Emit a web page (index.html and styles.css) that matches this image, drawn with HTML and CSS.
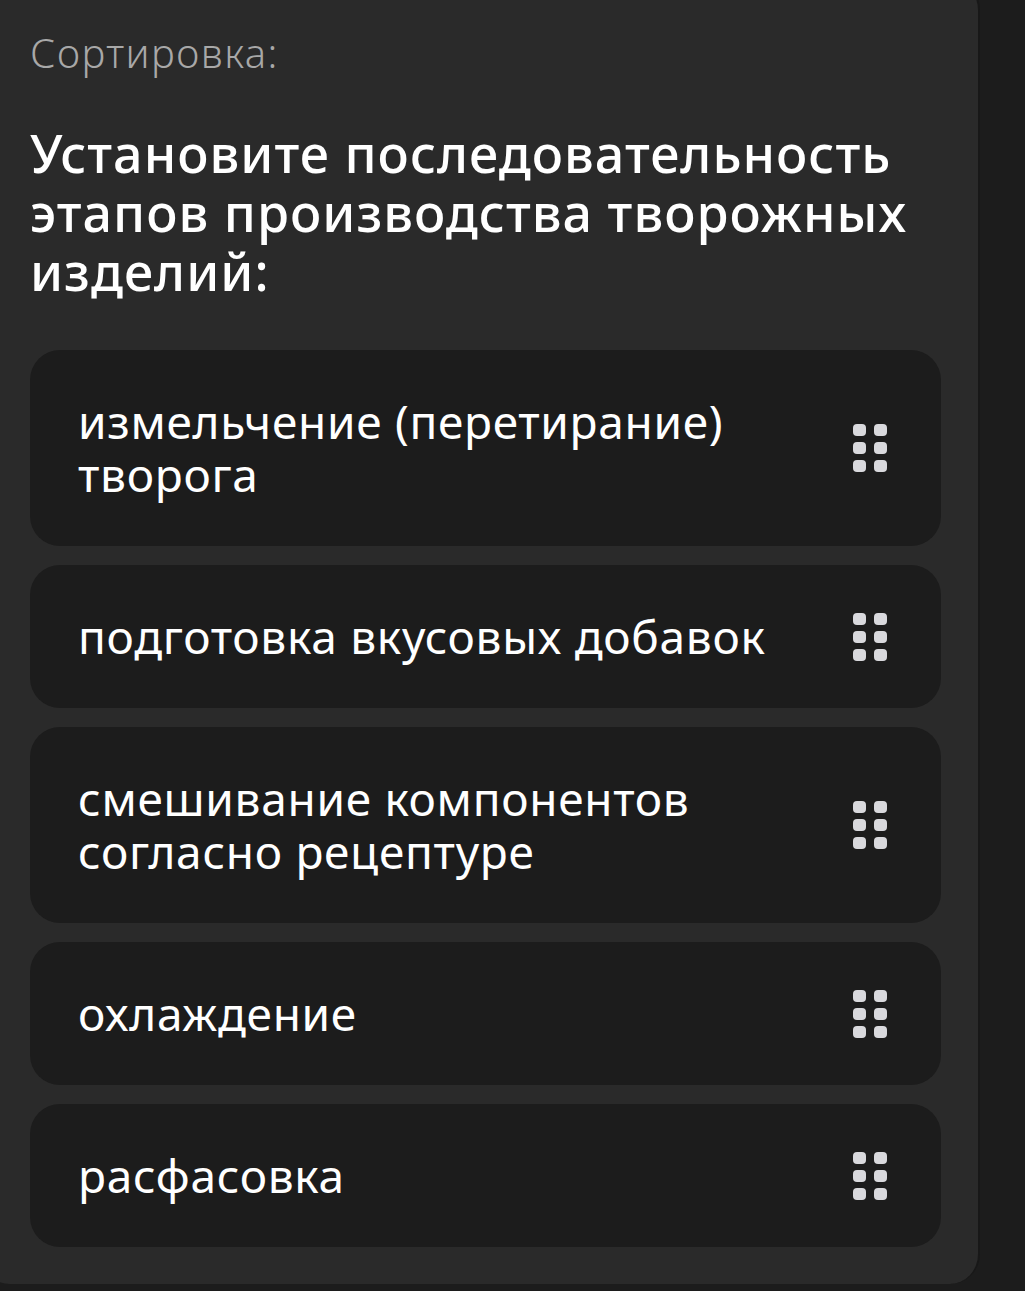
FILE: index.html
```html
<!DOCTYPE html>
<html lang="ru">
    <head>
        <meta charset="UTF-8">
        <meta name="viewport" content="width=device-width, initial-scale=1.0">
        <title>Сортировка</title>
        <link rel="stylesheet" href="styles.css">
    </head>
    <body>
        <div class="task-card">
            <div class="task-type">Сортировка:</div>
            <h1 class="task-question">Установите последовательность этапов производства творожных изделий:</h1>

            <div class="sort-list">
                <div class="sort-item">
                    <span class="sort-text">измельчение (перетирание) творога</span>
                    <span class="grip"><i></i><i></i><i></i><i></i><i></i><i></i></span>
                </div>
                <div class="sort-item">
                    <span class="sort-text">подготовка вкусовых добавок</span>
                    <span class="grip"><i></i><i></i><i></i><i></i><i></i><i></i></span>
                </div>
                <div class="sort-item">
                    <span class="sort-text">смешивание компонентов согласно рецептуре</span>
                    <span class="grip"><i></i><i></i><i></i><i></i><i></i><i></i></span>
                </div>
                <div class="sort-item">
                    <span class="sort-text">охлаждение</span>
                    <span class="grip"><i></i><i></i><i></i><i></i><i></i><i></i></span>
                </div>
                <div class="sort-item">
                    <span class="sort-text">расфасовка</span>
                    <span class="grip"><i></i><i></i><i></i><i></i><i></i><i></i></span>
                </div>
            </div>
        </div>
    </body>
</html>
```

FILE: styles.css
```css
* {
    margin: 0;
    padding: 0;
    box-sizing: border-box;
}

body {
    background-color: #1c1c1c;
    color: #fff;
    font-family: 'Noto Sans', 'DejaVu Sans', sans-serif;
    overflow: hidden;
}

.task-card {
    background-color: #2a2a2a;
    border-right: 2px solid #181818;
    border-radius: 30px;
    width: 1000px;
    margin: -20px 0 0 -20px;
    padding: 51px 37px 37px 50px;
}

.task-type {
    color: #a8a8a8;
    font-size: 40px;
    font-weight: 300;
    letter-spacing: 1.5px;
    line-height: 44px;
    margin-bottom: 48px;
}

.task-question {
    font-size: 52px;
    font-weight: 500;
    letter-spacing: 1px;
    line-height: 59px;
    margin-bottom: 50px;
}

.sort-list {
    display: flex;
    flex-direction: column;
    gap: 19px;
}

.sort-item {
    background-color: #1c1c1c;
    border-radius: 30px;
    display: flex;
    align-items: center;
    justify-content: space-between;
    padding: 45px 54px 45px 48px;
}

.sort-text {
    font-size: 46px;
    line-height: 53px;
    font-weight: 400;
    letter-spacing: 0.7px;
    max-width: 720px;
}

.grip {
    display: grid;
    grid-template-columns: 13px 13px;
    grid-auto-rows: 12px;
    gap: 6px 8px;
    flex: 0 0 auto;
}

.grip i {
    background-color: #d9d9dd;
    border-radius: 4px;
}
```
